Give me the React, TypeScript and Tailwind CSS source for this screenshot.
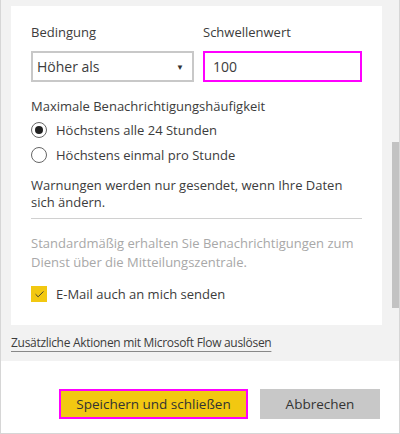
import { Check } from "lucide-react";

const font = { fontFamily: '"Open Sans", "Noto Sans", sans-serif' };

function Radio({ checked, label }: { checked?: boolean; label: string }) {
  return (
    <div className="flex items-center h-[25px]">
      <span className="w-[16px] h-[16px] rounded-full border border-[#666] flex items-center justify-center">
        {checked && <span className="w-[8px] h-[8px] rounded-full bg-[#222]" />}
      </span>
      <span className="ml-[9px]">{label}</span>
    </div>
  );
}

export default function App() {
  return (
    <div
      className="w-[400px] h-[434px] border-x border-b border-[#d6d6d6] bg-white flex flex-col text-[13px] text-[#3c3c3c] leading-[20px]"
      style={font}
    >
      {/* grey scroll area */}
      <div className="bg-[#f2f2f2] h-[361px] flex pl-[10px] pt-[6px]">
        <div className="w-[371px] flex flex-col">
          <div className="bg-white h-[319px] px-[20px] pt-[16px]">
            <div className="flex gap-[9px]">
              <div className="w-[163px]">
                <div className="h-[20px]">Bedingung</div>
                <div className="mt-[9px] h-[31px] border-2 border-[#c8c8c8] flex items-center justify-between pl-[4px] pr-[6px] text-[14px]">
                  <span>Höher als</span>
                  <span className="text-[8px] text-[#333] mr-[2px]">▼</span>
                </div>
              </div>
              <div className="flex-1">
                <div className="h-[20px]">Schwellenwert</div>
                <div className="mt-[9px] h-[31px] border-2 border-[#ff00ff] flex items-center pl-[8px] text-[14px]">
                  100
                </div>
              </div>
            </div>

            <div className="mt-[14px]">Maximale Benachrichtigungshäufigkeit</div>
            <div className="mt-[1px]">
              <Radio checked label="Höchstens alle 24 Stunden" />
              <Radio label="Höchstens einmal pro Stunde" />
            </div>

            <div className="mt-[10px] leading-[17px]">
              Warnungen werden nur gesendet, wenn Ihre Daten sich ändern.
            </div>
            <div className="mt-[7px] border-t border-[#d0d0d0]" />

            <div className="mt-[15px] text-[#a8a8a8] leading-[19px]">
              Standardmäßig erhalten Sie Benachrichtigungen zum Dienst über die Mitteilungszentrale.
            </div>

            <div className="mt-[12px] flex items-center">
              <span className="w-[16px] h-[16px] bg-[#f2c811] flex items-center justify-center">
                <Check className="w-[11px] h-[11px] text-[#333]" strokeWidth={2} />
              </span>
              <span className="ml-[9px]">E-Mail auch an mich senden</span>
            </div>
          </div>

          <div className="mt-[8px] text-[12px] tracking-[-0.3px]">
            <span className="underline decoration-[#888] underline-offset-[4px]">
              Zusätzliche Aktionen mit Microsoft Flow auslösen
            </span>
          </div>
        </div>

        {/* scrollbar */}
        <div className="ml-[10px] w-[7px] pt-[136px]">
          <div className="h-[166px] bg-[#c2c2c2]" />
        </div>
      </div>

      {/* footer */}
      <div className="flex justify-end gap-[12px] pr-[19px] pt-[28px] text-[13.5px]">
        <button className="w-[189px] h-[30px] bg-[#f2c811] border-2 border-[#ff00ff] text-[#333]">
          Speichern und schließen
        </button>
        <button className="w-[120px] h-[30px] bg-[#c8c8c8] text-[#333]">Abbrechen</button>
      </div>
    </div>
  );
}
